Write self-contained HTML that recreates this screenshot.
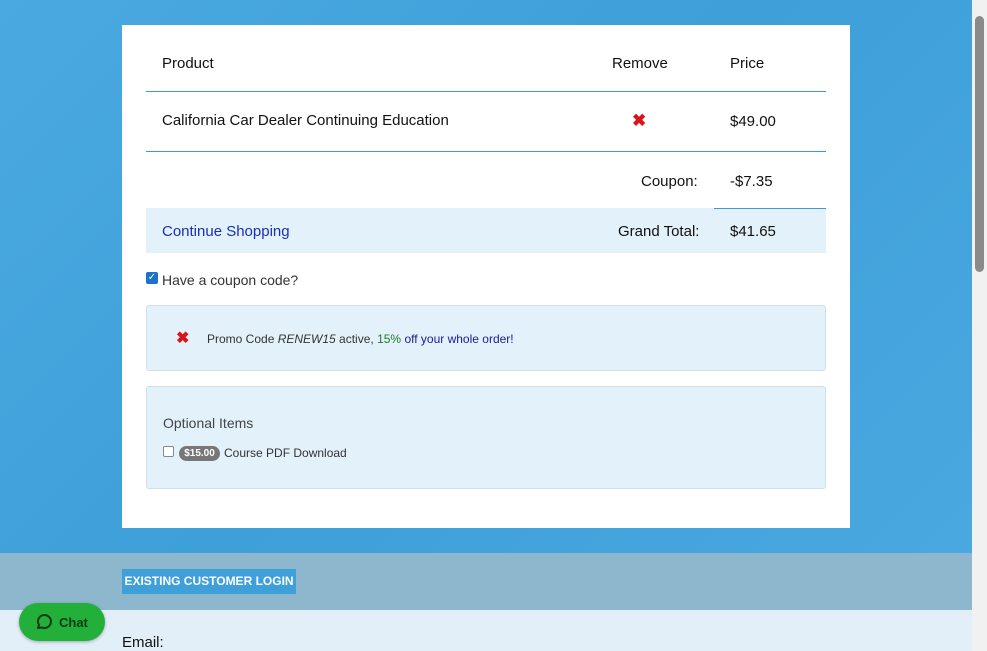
<!DOCTYPE html>
<html><head><meta charset="utf-8"><style>
body{margin:0;width:987px;height:651px;overflow:hidden;font-family:"Liberation Sans",sans-serif;position:relative;background:#e3eff8}
.bg{position:absolute;left:0;top:0;width:972px;height:553px;background:linear-gradient(135deg,#4aa9e0,#3e9fd9 50%,#4aa8e0)}
.band{position:absolute;left:0;top:553px;width:972px;height:57px;background:#8db7cc}
.scroll{position:absolute;left:972px;top:0;width:15px;height:651px;background:#f1f1f1}
.thumb{position:absolute;left:975px;top:16px;width:9px;height:256px;background:#8a8a8a;border-radius:5px}
.card{position:absolute;left:122px;top:25px;width:728px;height:503px;background:#fff}
.t{position:absolute;font-size:15px;color:#111}
.line{position:absolute;height:1px;background:#3d9ad4}
.box{position:absolute;left:24px;width:678px;background:#e3f2fa;border:1px solid #cfe0ea;border-radius:3px}
</style></head><body>
<div class="bg"></div><div class="band"></div>
<div class="scroll"></div><div class="thumb"></div>
<div class="card">
<div class="t" style="left:40px;top:30px">Product</div>
<div class="t" style="left:490px;top:30px">Remove</div>
<div class="t" style="left:608px;top:30px">Price</div>
<div class="line" style="left:24px;top:66px;width:680px"></div>
<div class="t" style="left:40px;top:87px">California Car Dealer Continuing Education</div>
<div class="t" style="left:510px;top:86px;color:#d9151c;font-weight:bold;font-size:17px">✖</div>
<div class="t" style="left:608px;top:88px">$49.00</div>
<div class="line" style="left:24px;top:126px;width:680px"></div>
<div class="t" style="left:519px;top:148px">Coupon:</div>
<div class="t" style="left:608px;top:148px">-$7.35</div>
<div style="position:absolute;left:24px;top:183px;width:680px;height:45px;background:#e3f2fa"></div>
<div class="line" style="left:592px;top:183px;width:112px"></div>
<div class="t" style="left:40px;top:198px;color:#1a2fb0">Continue Shopping</div>
<div class="t" style="left:496px;top:198px">Grand Total:</div>
<div class="t" style="left:608px;top:198px">$41.65</div>
<div style="position:absolute;left:24px;top:247px;width:12px;height:12px;background:#1a73c8;border-radius:2px;color:#fff;font-size:10px;line-height:12px;text-align:center">✓</div>
<div class="t" style="left:40px;top:247px;font-size:14px;color:#333">Have a coupon code?</div>
<div class="box" style="top:280px;height:64px"></div>
<div class="t" style="left:54px;top:303px;color:#d9151c;font-weight:bold;font-size:16px">✖</div>
<div class="t" style="left:85px;top:307px;font-size:12px;color:#333">Promo Code <i>RENEW15</i> active, <span style="color:#1e7a2a">15%</span> <span style="color:#1a1a9a">off your whole order!</span></div>
<div class="box" style="top:361px;height:101px"></div>
<div class="t" style="left:41px;top:390px;font-size:14px;color:#444">Optional Items</div>
<div style="position:absolute;left:41px;top:421px;width:9px;height:9px;border:1px solid #888;background:#fff;border-radius:2px"></div>
<div style="position:absolute;left:57px;top:421px;width:41px;height:15px;background:#777;border-radius:8px;color:#fff;font-size:10px;font-weight:bold;text-align:center;line-height:15px">$15.00</div>
<div class="t" style="left:102px;top:421px;font-size:12px;color:#333">Course PDF Download</div>
</div>
<div style="position:absolute;left:122px;top:569px;width:174px;height:25px;background:#3e9fd9;color:#fff;font-size:12px;font-weight:bold;line-height:25px;text-align:center">EXISTING CUSTOMER LOGIN</div>
<div class="t" style="left:122px;top:634px">Email:</div>
<div style="position:absolute;left:19px;top:603px;width:86px;height:38px;background:#22b03a;border-radius:19px;box-shadow:0 1px 3px rgba(0,0,0,.3)">
<svg style="position:absolute;left:15px;top:10px" width="18" height="18" viewBox="0 0 18 18"><path d="M4 15 L5 12 A6.5 6.5 0 1 1 8 14.5 Z" fill="none" stroke="#0c3a14" stroke-width="2" stroke-linejoin="round"/></svg>
<span style="position:absolute;left:40px;top:12px;font-size:13px;font-weight:bold;color:#0c3a14">Chat</span></div>
</body></html>
